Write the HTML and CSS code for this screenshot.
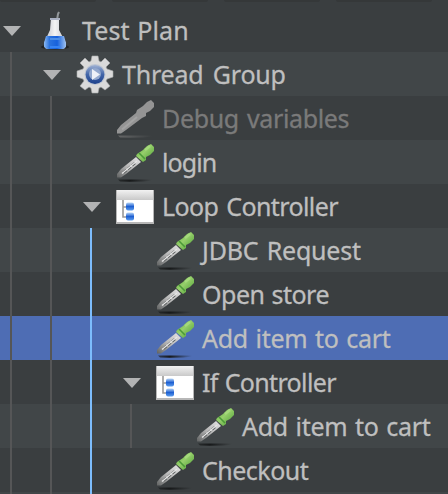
FILE: index.html
```html
<!DOCTYPE html>
<html lang="en">
<head>
<meta charset="utf-8">
<title>Test Plan</title>
<link rel="stylesheet" href="styles.css">
</head>
<body>
<svg class="defs" width="0" height="0" aria-hidden="true">
  <defs>
    <linearGradient id="green" x1="0" y1="0" x2="1" y2="1"><stop offset="0" stop-color="#5aa83c"/><stop offset=".45" stop-color="#96cf6b"/><stop offset="1" stop-color="#489a31"/></linearGradient>
    <linearGradient id="shade"><stop offset="0" stop-color="#17191a" stop-opacity=".6"/><stop offset=".35" stop-color="#17191a"/><stop offset="1" stop-color="#17191a" stop-opacity="0"/></linearGradient>
    <linearGradient id="shade-off"><stop offset="0" stop-color="#777" stop-opacity=".7"/><stop offset="1" stop-color="#777" stop-opacity="0"/></linearGradient>
    <linearGradient id="head" x2="0" y2="1"><stop offset="0" stop-color="#f2f2f2"/><stop offset="1" stop-color="#c9c9c9"/></linearGradient>
    <linearGradient id="node" x2="0" y2="1"><stop offset="0" stop-color="#b9d6f6"/><stop offset=".5" stop-color="#1e60d2"/><stop offset="1" stop-color="#5e9eee"/></linearGradient>
    <linearGradient id="ring" x2="0" y2="1"><stop offset="0" stop-color="#9fb2d4"/><stop offset=".5" stop-color="#4265a8"/><stop offset="1" stop-color="#1e428d"/></linearGradient>
    <linearGradient id="glass"><stop offset="0" stop-color="#b9bcc4"/><stop offset=".5" stop-color="#f4f4f4"/><stop offset="1" stop-color="#bfc3ca"/></linearGradient>
    <linearGradient id="liquid"><stop offset="0" stop-color="#8ab9f3"/><stop offset=".25" stop-color="#2b73de"/><stop offset=".6" stop-color="#1661dc"/><stop offset="1" stop-color="#a0c3f2"/></linearGradient>
    <linearGradient id="metal" x1="1" y1="0" x2="0" y2="1"><stop offset="0" stop-color="#e4e4e4"/><stop offset=".5" stop-color="#bababa"/><stop offset="1" stop-color="#606262"/></linearGradient>
  </defs>
  <symbol id="arrow" viewBox="0 0 18 10"><path d="M0 0H18L9 10Z" fill="#b2b3b4"/></symbol>
  <symbol id="flask" viewBox="0 0 40 40">
    <ellipse cx="19" cy="37" rx="14" ry="2.4" fill="#202325"/>
    <path d="M21 10L22 4L23 2" fill="none" stroke="#92979a" stroke-width="2"/>
    <path d="M15 8H23V20L30 33V36Q29 39 26 39H12Q9 39 8 36V33L14 20Z" fill="url(#glass)"/>
    <path d="M10 26H28L30 33V36Q29 39 26 39H12Q9 39 8 36V33Z" fill="url(#liquid)"/>
    <path d="M14 29H24" stroke="#4d8fe6" stroke-width="2"/>
    <path d="M14 37H24" stroke="#3583f4" stroke-width="2"/>
    <path d="M14 9H24" stroke="#a9b0c2" stroke-width="2"/>
  </symbol>
  <symbol id="gear" viewBox="0 0 40 40">
    <path d="M15 7L16 2H22L23 7L25 8L29 4L34 9L30 13L31 15L37 17V23L31 25L30 27L34 32L29 36L25 33L23 34L22 39H16L15 34L13 33L9 36L4 32L8 27L7 25L1 23V17L7 15L8 13L4 9L9 4L13 8Z" fill="#dadada" stroke="#a9abac" stroke-width=".6"/>
    <circle cx="19" cy="20.5" r="10.5" fill="#bfc6d2"/>
    <circle cx="19" cy="20.5" r="9.4" fill="url(#ring)"/>
    <circle cx="19" cy="20" r="6" fill="#93a8cd"/>
    <path d="M16 15L24 20.5L16 26Z" fill="#eef1f7"/>
  </symbol>
  <symbol id="pipette" viewBox="0 0 40 40">
    <path d="M2 37.600H36V38.500Q28 40 4 39.600Z" fill="url(#shade)"/>
    <path d="M20 15L25 20L10 32L5 35.500H1V32L5 27Z" fill="url(#metal)"/>
    <path d="M19 21L7 31" fill="none" stroke="#555959" stroke-width="2.400" stroke-dasharray="4 1.500"/>
    <path d="M21 19L6 31.500" fill="none" stroke="#e6e6e6" stroke-width="1.300"/>
    <path d="M21 12L27 8L31 4L35 2L38 5V9L34 13L30 15V18L27 20L20 14Z" fill="url(#green)"/>
    <path d="M23 11L29 17" stroke="#4b9a38" stroke-width="1.600"/>
    <path d="M29 8L34 4" stroke="#a5d97c" stroke-width="2.500"/>
  </symbol>
  <symbol id="pipette-off" viewBox="0 0 40 40">
    <path d="M2 37.600H36V38.500Q28 40 4 39.600Z" fill="url(#shade-off)"/>
    <path d="M21 12L27 8L31 4L35 2L38 5V9L34 13L30 15V18L26 20L10 32L5 35.500H1V32L5 27L20 15Z" fill="#949494"/>
    <path d="M21 19L6 31.500" stroke="#a3a3a3" stroke-width="2"/>
  </symbol>
  <symbol id="controller" viewBox="0 0 40 40">
    <path d="M0 4H38V38H0Z" fill="#b7b7b7"/>
    <path d="M1 14H37V36H1Z" fill="#fff"/>
    <path d="M1 4H37V14H1Z" fill="url(#head)"/>
    <path d="M7 14V31H10M7 21H10" fill="none" stroke="#999" stroke-width="1.600"/>
    <rect x="10" y="16.500" width="8" height="8" rx="2" fill="url(#node)"/>
    <rect x="10" y="26.500" width="8" height="8" rx="2" fill="url(#node)"/>
  </symbol>
</svg>
<div class="toolbar"><i></i><i></i><i></i><i></i></div>
<main class="tree">
  <div class="row"><svg class="arrow"><use href="#arrow"/></svg><svg class="icon"><use href="#flask"/></svg><span class="label plan">Test Plan</span></div>
  <div class="row"><b class="guide"></b><svg class="arrow"><use href="#arrow"/></svg><svg class="icon"><use href="#gear"/></svg><span class="label group">Thread Group</span></div>
  <div class="row"><b class="guide"></b><b class="guide"></b><i class="arrow"></i><svg class="icon"><use href="#pipette-off"/></svg><span class="label debug">Debug variables</span></div>
  <div class="row"><b class="guide"></b><b class="guide"></b><i class="arrow"></i><svg class="icon"><use href="#pipette"/></svg><span class="label login">login</span></div>
  <div class="row"><b class="guide"></b><b class="guide"></b><svg class="arrow"><use href="#arrow"/></svg><svg class="icon"><use href="#controller"/></svg><span class="label loop">Loop Controller</span></div>
  <div class="row"><b class="guide"></b><b class="guide"></b><b class="guide active"></b><i class="arrow"></i><svg class="icon"><use href="#pipette"/></svg><span class="label jdbc">JDBC Request</span></div>
  <div class="row"><b class="guide"></b><b class="guide"></b><b class="guide active"></b><i class="arrow"></i><svg class="icon"><use href="#pipette"/></svg><span class="label store">Open store</span></div>
  <div class="row selected"><b class="guide"></b><b class="guide"></b><b class="guide active"></b><i class="arrow"></i><svg class="icon"><use href="#pipette"/></svg><span class="label add">Add item to cart</span></div>
  <div class="row"><b class="guide"></b><b class="guide"></b><b class="guide active"></b><svg class="arrow"><use href="#arrow"/></svg><svg class="icon"><use href="#controller"/></svg><span class="label if">If Controller</span></div>
  <div class="row"><b class="guide"></b><b class="guide"></b><b class="guide active"></b><b class="guide"></b><i class="arrow"></i><svg class="icon"><use href="#pipette"/></svg><span class="label add">Add item to cart</span></div>
  <div class="row"><b class="guide"></b><b class="guide"></b><b class="guide active"></b><i class="arrow"></i><svg class="icon"><use href="#pipette"/></svg><span class="label checkout">Checkout</span></div>
  <div class="row last"><b class="guide"></b><b class="guide"></b><b class="guide active"></b></div>
</main>
</body>
</html>
```
FILE: styles.css
```css
* { box-sizing: border-box; }
body {
  margin: 0;
  width: 448px;
  height: 494px;
  overflow: hidden;
  background: #3a3e40;
  font-family: "Noto Sans", sans-serif;
}
.defs { position: absolute; }
.toolbar { display: flex; gap: 16px; height: 8px; overflow: hidden; }
.toolbar i { flex: 0 0 96px; height: 2px; background: #353839; border-radius: 0 0 2px 2px; }
.row {
  display: flex;
  align-items: center;
  height: 44px;
  background: #3a3e40;
}
.row:nth-child(even) { background: #414648; }
.row.selected { background: #4e6db4; }
.row.last { height: 2px; overflow: hidden; }
.guide {
  flex: 0 0 40px;
  height: 44px;
  border-left: 2px solid #555657;
  margin-left: 10px;
  margin-right: -10px;
}
.guide.active { border-color: #7dbdfd; }
.arrow { flex: 0 0 18px; height: 10px; margin: 2px 0 0 3px; }
.icon { flex: 0 0 40px; height: 40px; margin-left: 15px; }
.label {
  margin-left: 6px;
  color: #bfbfbf;
  font-size: 25px;
  line-height: 44px;
  letter-spacing: -0.5px;
  white-space: nowrap;
  -webkit-text-stroke: 0.3px currentColor;
}
.plan { letter-spacing: 0.1px; word-spacing: 1px; }
.group { letter-spacing: -0.2px; word-spacing: 3px; }
.debug { color: #7a7a7a; letter-spacing: -0.35px; word-spacing: 2px; }
.login { letter-spacing: -0.9px; }
.loop { letter-spacing: -0.6px; word-spacing: 2px; }
.jdbc { letter-spacing: -0.2px; word-spacing: 2px; }
.store { word-spacing: 1px; }
.add { letter-spacing: -0.3px; word-spacing: 1.5px; }
.if { letter-spacing: -0.65px; word-spacing: 1px; }
.checkout { letter-spacing: -0.5px; }
```
